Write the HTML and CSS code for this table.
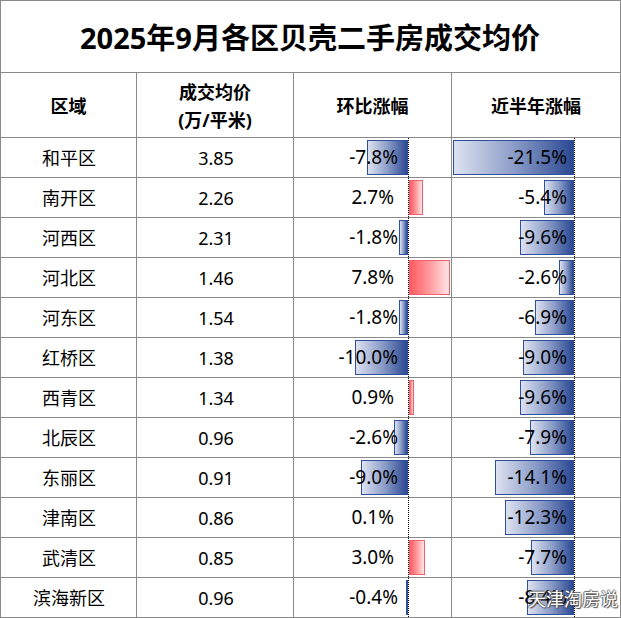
FILE: index.html
```html
<!DOCTYPE html>
<html lang="zh-CN">
<head>
<meta charset="utf-8">
<title>2025年9月各区贝壳二手房成交均价</title>
<link rel="stylesheet" href="styles.css">
</head>
<body>
<div class="wrap">
  <div class="table">
    <div class="title">2025年9月各区贝壳二手房成交均价</div>
    <div class="th">区域</div>
    <div class="th th2"><span>成交均价</span><span>(万/平米)</span></div>
    <div class="th">环比涨幅</div>
    <div class="th">近半年涨幅</div>

    <div class="td name">和平区</div><div class="td num">3.85</div>
    <div class="td mom"><div class="left neg"><span class="bar nbar" style="width:41px"></span><span class="val">-7.8%</span></div><div class="axis"></div><div class="right"></div></div>
    <div class="td half"><div class="left neg"><span class="bar nbar" style="width:121px"></span><span class="val">-21.5%</span></div><div class="axis"></div><div class="right"></div></div>

    <div class="td name">南开区</div><div class="td num">2.26</div>
    <div class="td mom"><div class="left pos"><span class="val">2.7%</span></div><div class="axis"></div><div class="right"><span class="bar pbar" style="width:14px"></span></div></div>
    <div class="td half"><div class="left neg"><span class="bar nbar" style="width:30px"></span><span class="val">-5.4%</span></div><div class="axis"></div><div class="right"></div></div>

    <div class="td name">河西区</div><div class="td num">2.31</div>
    <div class="td mom"><div class="left neg"><span class="bar nbar" style="width:9px"></span><span class="val">-1.8%</span></div><div class="axis"></div><div class="right"></div></div>
    <div class="td half"><div class="left neg"><span class="bar nbar" style="width:54px"></span><span class="val">-9.6%</span></div><div class="axis"></div><div class="right"></div></div>

    <div class="td name">河北区</div><div class="td num">1.46</div>
    <div class="td mom"><div class="left pos"><span class="val">7.8%</span></div><div class="axis"></div><div class="right"><span class="bar pbar" style="width:41px"></span></div></div>
    <div class="td half"><div class="left neg"><span class="bar nbar" style="width:15px"></span><span class="val">-2.6%</span></div><div class="axis"></div><div class="right"></div></div>

    <div class="td name">河东区</div><div class="td num">1.54</div>
    <div class="td mom"><div class="left neg"><span class="bar nbar" style="width:9px"></span><span class="val">-1.8%</span></div><div class="axis"></div><div class="right"></div></div>
    <div class="td half"><div class="left neg"><span class="bar nbar" style="width:39px"></span><span class="val">-6.9%</span></div><div class="axis"></div><div class="right"></div></div>

    <div class="td name">红桥区</div><div class="td num">1.38</div>
    <div class="td mom"><div class="left neg"><span class="bar nbar" style="width:53px"></span><span class="val">-10.0%</span></div><div class="axis"></div><div class="right"></div></div>
    <div class="td half"><div class="left neg"><span class="bar nbar" style="width:51px"></span><span class="val">-9.0%</span></div><div class="axis"></div><div class="right"></div></div>

    <div class="td name">西青区</div><div class="td num">1.34</div>
    <div class="td mom"><div class="left pos"><span class="val">0.9%</span></div><div class="axis"></div><div class="right"><span class="bar pbar" style="width:5px"></span></div></div>
    <div class="td half"><div class="left neg"><span class="bar nbar" style="width:54px"></span><span class="val">-9.6%</span></div><div class="axis"></div><div class="right"></div></div>

    <div class="td name">北辰区</div><div class="td num">0.96</div>
    <div class="td mom"><div class="left neg"><span class="bar nbar" style="width:14px"></span><span class="val">-2.6%</span></div><div class="axis"></div><div class="right"></div></div>
    <div class="td half"><div class="left neg"><span class="bar nbar" style="width:44px"></span><span class="val">-7.9%</span></div><div class="axis"></div><div class="right"></div></div>

    <div class="td name">东丽区</div><div class="td num">0.91</div>
    <div class="td mom"><div class="left neg"><span class="bar nbar" style="width:47px"></span><span class="val">-9.0%</span></div><div class="axis"></div><div class="right"></div></div>
    <div class="td half"><div class="left neg"><span class="bar nbar" style="width:79px"></span><span class="val">-14.1%</span></div><div class="axis"></div><div class="right"></div></div>

    <div class="td name">津南区</div><div class="td num">0.86</div>
    <div class="td mom"><div class="left pos"><span class="val">0.1%</span></div><div class="axis"></div><div class="right"></div></div>
    <div class="td half"><div class="left neg"><span class="bar nbar" style="width:69px"></span><span class="val">-12.3%</span></div><div class="axis"></div><div class="right"></div></div>

    <div class="td name">武清区</div><div class="td num">0.85</div>
    <div class="td mom"><div class="left pos"><span class="val">3.0%</span></div><div class="axis"></div><div class="right"><span class="bar pbar" style="width:16px"></span></div></div>
    <div class="td half"><div class="left neg"><span class="bar nbar" style="width:43px"></span><span class="val">-7.7%</span></div><div class="axis"></div><div class="right"></div></div>

    <div class="td name">滨海新区</div><div class="td num">0.96</div>
    <div class="td mom"><div class="left neg"><span class="bar nbar" style="width:2px"></span><span class="val">-0.4%</span></div><div class="axis"></div><div class="right"></div></div>
    <div class="td half"><div class="left neg"><span class="bar nbar" style="width:47px"></span><span class="val">-8.4%</span></div><div class="axis"></div><div class="right"></div></div>
  </div>
  <div class="watermark">天津淘房说</div>
</div>
</body>
</html>
```

FILE: styles.css
```css
* { box-sizing: border-box; }
html, body {
  margin: 0;
  padding: 0;
  background: #fff;
}
body {
  font-family: "Noto Sans", "Noto Sans CJK SC", sans-serif;
  color: #000;
}
.wrap {
  position: relative;
  width: 621px;
  height: 618px;
}
.table {
  display: grid;
  grid-template-columns: 135px 156px 157px 168px;
  grid-template-rows: 71px 64px repeat(12, 39px);
  gap: 1px;
  padding: 1px;
  background: #8a8a8a;
  width: 621px;
  height: 618px;
}
.title {
  grid-column: 1 / 5;
  background: #fff;
  display: flex;
  align-items: center;
  justify-content: center;
  font-size: 29px;
  font-weight: 700;
  line-height: 1;
  padding-top: 2px;
  padding-right: 1px;
}
.th {
  background: #fff;
  display: flex;
  flex-direction: column;
  align-items: center;
  justify-content: center;
  font-size: 18px;
  font-weight: 700;
  line-height: 28px;
  padding-top: 2px;
}
.td {
  background: #fff;
  font-size: 18px;
  line-height: 1;
}
.name, .num {
  display: flex;
  align-items: center;
  justify-content: center;
}
.name { padding-left: 1px; }
.num { padding-left: 2px; }
.mom, .half {
  display: flex;
  align-items: stretch;
}
.mom .left { width: 114px; }
.mom .right { width: 42px; }
.half .left { width: 122px; }
.half .right { width: 45px; }
.left, .right {
  position: relative;
  display: flex;
  align-items: center;
  justify-content: flex-end;
}
.axis {
  width: 1px;
  border-left: 1px dotted #000;
}
.val {
  position: relative;
  z-index: 1;
  font-size: 19px;
}
.mom .neg { padding-right: 10px; }
.mom .pos { padding-right: 14px; }
.half .neg { padding-right: 7px; }
.bar {
  position: absolute;
  top: 2px;
  bottom: 2px;
}
.nbar {
  right: 0;
  border: 1px solid #2f4e9c;
  background: linear-gradient(to right, #dde2f0 0%, #8c9dc8 50%, #2b4892 100%);
}
.pbar {
  left: 0;
  border: 1px solid #f0606c;
  background: linear-gradient(to right, #ff5a5f 0%, #ff9a9d 50%, #ffe6e7 100%);
}
.watermark {
  position: absolute;
  left: 528px;
  top: 587px;
  font-family: "Noto Sans CJK SC", sans-serif;
  font-size: 18px;
  line-height: 22px;
  color: #fff;
  text-shadow: 1px 1px 1px #444, -1px 0 1px #666, 0 -1px 1px #666;
  z-index: 2;
}
```
